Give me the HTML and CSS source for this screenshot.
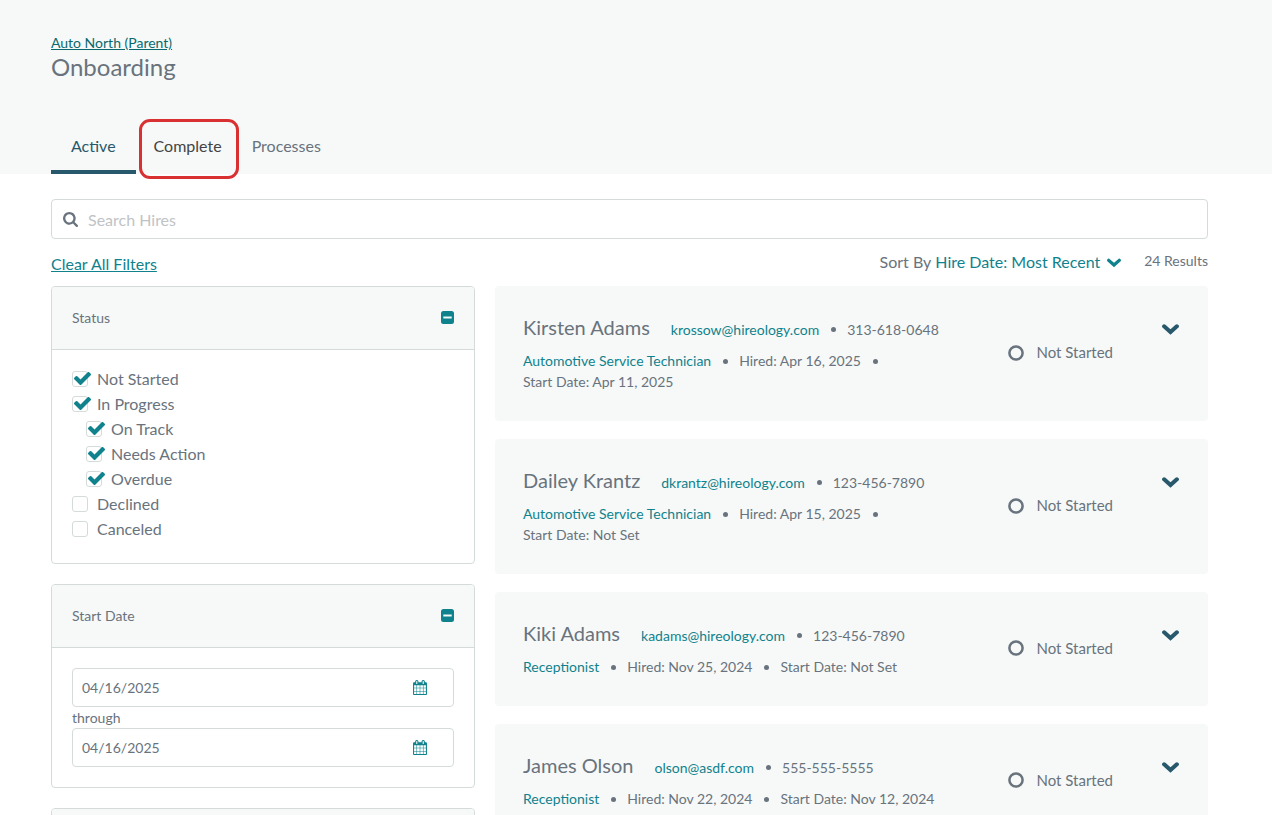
FILE: index.html
```html
<!DOCTYPE html>
<html lang="en">
<head>
<meta charset="utf-8">
<meta name="viewport" content="width=device-width, initial-scale=1">
<title>Onboarding</title>
<link rel="stylesheet" href="styles.css">
</head>
<body>
<svg class="sprite" aria-hidden="true">
  <symbol id="search" viewBox="64 128 1664 1664"><path d="M1216 832q0-185-131.500-316.500t-316.500-131.500-316.500 131.500-131.500 316.500 131.500 316.500 316.500 131.500 316.500-131.500 131.500-316.500zm512 832q0 52-38 90t-90 38q-54 0-90-38l-343-342q-179 124-399 124-143 0-273.500-55.500t-225-150-150-225-55.500-273.500 55.500-273.500 150-225 225-150 273.500-55.500 273.500 55.500 225 150 150 225 55.500 273.500q0 220-124 399l343 343q37 37 37 90z"/></symbol>
  <symbol id="check" viewBox="121 338 1550 1184"><path d="M1671 566q0 40-28 68l-724 724-136 136q-28 28-68 28t-68-28l-136-136-362-362q-28-28-28-68t28-68l136-136q28-28 68-28t68 28l294 295 656-657q28-28 68-28t68 28l136 136q28 28 28 68z"/></symbol>
  <symbol id="calendar" viewBox="64 0 1664 1792"><path d="M192 1664h288v-288h-288v288zm352 0h320v-288h-320v288zm-352-352h288v-320h-288v320zm352 0h320v-320h-320v320zm-352-384h288v-288h-288v288zm736 736h320v-288h-320v288zm-384-736h320v-288h-320v288zm768 736h288v-288h-288v288zm-384-352h320v-320h-320v320zm-352-864v-288q0-13-9.500-22.500t-22.500-9.500h-64q-13 0-22.500 9.500t-9.500 22.500v288q0 13 9.500 22.500t22.500 9.500h64q13 0 22.500-9.500t9.500-22.500zm736 864h288v-320h-288v320zm-384-384h320v-288h-320v288zm384 0h288v-288h-288v288zm32-480v-288q0-13-9.500-22.500t-22.500-9.500h-64q-13 0-22.500 9.500t-9.500 22.500v288q0 13 9.500 22.500t22.500 9.500h64q13 0 22.500-9.500t9.500-22.500zm384-64v1280q0 52-38 90t-90 38h-1408q-52 0-90-38t-38-90v-1280q0-52 38-90t90-38h128v-96q0-66 47-113t113-47h64q66 0 113 47t47 113v96h384v-96q0-66 47-113t113-47h64q66 0 113 47t47 113v96h128q52 0 90 38t38 90z"/></symbol>
  <symbol id="chevron" viewBox="0 0 16 10"><path d="M2 2l6 5.400L14 2" fill="none" stroke="currentColor" stroke-width="3.800" stroke-linecap="round"/></symbol>
  <symbol id="ring" viewBox="0 0 16 16"><circle cx="8" cy="8" r="6.600" fill="none" stroke="currentColor" stroke-width="2.500"/></symbol>
  <symbol id="minus" viewBox="0 0 13 13"><path fill-rule="evenodd" d="M2.500 0h8A2.500 2.500 0 0 1 13 2.500v8a2.500 2.500 0 0 1-2.500 2.500h-8A2.500 2.500 0 0 1 0 10.500v-8A2.500 2.500 0 0 1 2.500 0zM2.300 5.500v2h8.400v-2z"/></symbol>
</svg>

<header class="page-header">
  <a class="parent-link" href="#">Auto North (Parent)</a>
  <h1 class="page-title">Onboarding</h1>
  <nav class="tabs">
    <a class="tab tab-active" href="#">Active</a>
    <a class="tab tab-highlight" href="#">Complete</a>
    <a class="tab" href="#">Processes</a>
  </nav>
</header>

<main class="content">
  <div class="search">
    <svg class="search-icon" aria-hidden="true"><use href="#search"/></svg>
    <input class="search-input" type="text" placeholder="Search Hires" aria-label="Search Hires">
  </div>

  <div class="toolbar">
    <a class="clear" href="#">Clear All Filters</a>
    <div class="sort">
      <span>Sort By</span>
      <button class="sort-button" type="button">Hire Date: Most Recent <svg class="sort-chevron" aria-hidden="true"><use href="#chevron"/></svg></button>
    </div>
    <span class="results">24 Results</span>
  </div>

  <div class="columns">
    <aside class="filters">
      <section class="panel">
        <div class="panel-header">
          <h2 class="panel-title">Status</h2>
          <button class="icon-button" type="button" aria-label="Collapse Status"><svg class="minus-icon"><use href="#minus"/></svg></button>
        </div>
        <div class="panel-body status-list">
          <label class="option"><span class="box"><input class="tick" type="checkbox" checked><svg class="mark"><use href="#check"/></svg></span>Not Started</label>
          <label class="option"><span class="box"><input class="tick" type="checkbox" checked><svg class="mark"><use href="#check"/></svg></span>In Progress</label>
          <label class="option option-nested"><span class="box"><input class="tick" type="checkbox" checked><svg class="mark"><use href="#check"/></svg></span>On Track</label>
          <label class="option option-nested"><span class="box"><input class="tick" type="checkbox" checked><svg class="mark"><use href="#check"/></svg></span>Needs Action</label>
          <label class="option option-nested"><span class="box"><input class="tick" type="checkbox" checked><svg class="mark"><use href="#check"/></svg></span>Overdue</label>
          <label class="option"><span class="box"><input class="tick" type="checkbox"><svg class="mark"><use href="#check"/></svg></span>Declined</label>
          <label class="option"><span class="box"><input class="tick" type="checkbox"><svg class="mark"><use href="#check"/></svg></span>Canceled</label>
        </div>
      </section>

      <section class="panel">
        <div class="panel-header">
          <h2 class="panel-title">Start Date</h2>
          <button class="icon-button" type="button" aria-label="Collapse Start Date"><svg class="minus-icon"><use href="#minus"/></svg></button>
        </div>
        <div class="panel-body date-range">
          <div class="date-field">
            <input class="date-input" type="text" value="04/16/2025" aria-label="Start date from">
            <button class="icon-button" type="button" aria-label="Open calendar"><svg class="calendar-icon"><use href="#calendar"/></svg></button>
          </div>
          <label class="through" for="date-to">through</label>
          <div class="date-field">
            <input class="date-input" id="date-to" type="text" value="04/16/2025">
            <button class="icon-button" type="button" aria-label="Open calendar"><svg class="calendar-icon"><use href="#calendar"/></svg></button>
          </div>
        </div>
      </section>

      <section class="panel">
        <div class="panel-header"></div>
      </section>
    </aside>

    <div class="hires">
      <article class="card">
        <div class="info">
          <div class="person">
            <h3 class="name">Kirsten Adams</h3>
            <a class="link" href="#">krossow@hireology.com</a><i class="dot"></i><span>313-618-0648</span>
          </div>
          <div class="details">
            <a class="link" href="#">Automotive Service Technician</a><i class="dot"></i><span>Hired: Apr 16, 2025</span><i class="dot"></i><span>Start Date: Apr 11, 2025</span>
          </div>
        </div>
        <div class="status"><svg class="ring" aria-hidden="true"><use href="#ring"/></svg>Not Started</div>
        <button class="icon-button expand" type="button" aria-label="Expand Kirsten Adams"><svg class="chevron-icon"><use href="#chevron"/></svg></button>
      </article>

      <article class="card">
        <div class="info">
          <div class="person">
            <h3 class="name">Dailey Krantz</h3>
            <a class="link" href="#">dkrantz@hireology.com</a><i class="dot"></i><span>123-456-7890</span>
          </div>
          <div class="details">
            <a class="link" href="#">Automotive Service Technician</a><i class="dot"></i><span>Hired: Apr 15, 2025</span><i class="dot"></i><span>Start Date: Not Set</span>
          </div>
        </div>
        <div class="status"><svg class="ring" aria-hidden="true"><use href="#ring"/></svg>Not Started</div>
        <button class="icon-button expand" type="button" aria-label="Expand Dailey Krantz"><svg class="chevron-icon"><use href="#chevron"/></svg></button>
      </article>

      <article class="card">
        <div class="info">
          <div class="person">
            <h3 class="name">Kiki Adams</h3>
            <a class="link" href="#">kadams@hireology.com</a><i class="dot"></i><span>123-456-7890</span>
          </div>
          <div class="details">
            <a class="link" href="#">Receptionist</a><i class="dot"></i><span>Hired: Nov 25, 2024</span><i class="dot"></i><span>Start Date: Not Set</span>
          </div>
        </div>
        <div class="status"><svg class="ring" aria-hidden="true"><use href="#ring"/></svg>Not Started</div>
        <button class="icon-button expand" type="button" aria-label="Expand Kiki Adams"><svg class="chevron-icon"><use href="#chevron"/></svg></button>
      </article>

      <article class="card">
        <div class="info">
          <div class="person">
            <h3 class="name">James Olson</h3>
            <a class="link" href="#">olson@asdf.com</a><i class="dot"></i><span>555-555-5555</span>
          </div>
          <div class="details">
            <a class="link" href="#">Receptionist</a><i class="dot"></i><span>Hired: Nov 22, 2024</span><i class="dot"></i><span>Start Date: Nov 12, 2024</span>
          </div>
        </div>
        <div class="status"><svg class="ring" aria-hidden="true"><use href="#ring"/></svg>Not Started</div>
        <button class="icon-button expand" type="button" aria-label="Expand James Olson"><svg class="chevron-icon"><use href="#chevron"/></svg></button>
      </article>
    </div>
  </div>
</main>
</body>
</html>
```

FILE: styles.css
```css
:root {
  --text: #69737d;
  --teal: #0f828d;
  --navy: #28586b;
  --surface: #f7f9f8;
  --line: #d5dadb;
}

* { box-sizing: border-box; }

body {
  margin: 0;
  height: 100vh;
  overflow: hidden;
  background: #fff;
  color: var(--text);
  font: 14px/21px Lato, sans-serif;
}

h1, h2, h3 { margin: 0; font-weight: 400; }

button, input { font: inherit; color: inherit; }

svg { display: block; fill: currentColor; }

.sprite { position: absolute; width: 0; height: 0; }

.page-header {
  display: flex;
  flex-direction: column;
  align-items: flex-start;
  padding: 32px 64px 0 51px;
  background: var(--surface);
}

.parent-link { color: #0a696f; }

.page-title { font-size: 24px; line-height: 28px; }

.tabs {
  display: flex;
  gap: 3px;
  height: 55px;
  margin-top: 38px;
  font-size: 16px;
}

.tab {
  padding: 16px 10px 0;
  color: var(--text);
  text-decoration: none;
}

.tab-active {
  padding: 16px 20px 0;
  border-bottom: 4px solid var(--navy);
  color: var(--navy);
}

.tab-highlight {
  height: 60px;
  padding: 13px 14px 0 12px;
  border: 3px solid #d93032;
  border-radius: 11px;
  color: #444;
}

.content { padding: 25px 64px 0 51px; }

.search {
  display: flex;
  align-items: center;
  gap: 10px;
  height: 40px;
  padding: 0 11px;
  border: 1px solid var(--line);
  border-radius: 4px;
}

.search-icon { width: 15px; height: 15px; }

.search-input {
  flex: 1;
  min-width: 0;
  padding: 0;
  border: 0;
  background: none;
  font-size: 16px;
  outline: none;
}

.search-input::placeholder { color: #bfc3c6; opacity: 1; }

.toolbar {
  display: flex;
  align-items: flex-start;
  height: 47px;
  padding-top: 12px;
  font-size: 16px;
}

.clear { margin: 2px auto 0 0; color: var(--teal); }

.sort { display: flex; gap: 4px; }

.sort-button {
  display: flex;
  align-items: center;
  gap: 7px;
  padding: 0;
  border: 0;
  background: none;
  color: var(--teal);
}

.sort-chevron { width: 14px; height: 10px; margin-top: 2px; }

.results { margin-left: 23px; font-size: 14px; line-height: 20px; }

.columns {
  display: grid;
  grid-template-columns: minmax(0, 424fr) minmax(0, 713fr);
  gap: 20px;
  align-items: start;
}

.filters { display: grid; gap: 20px; }

.panel { border: 1px solid var(--line); border-radius: 4px; overflow: hidden; }

.panel-header {
  display: flex;
  align-items: center;
  justify-content: space-between;
  height: 63px;
  padding: 0 20px 2px;
  border-bottom: 1px solid var(--line);
  background: var(--surface);
}

.panel-title { font-size: 14px; }

.icon-button { padding: 0; border: 0; background: none; color: var(--teal); }

.minus-icon { width: 13px; height: 13px; }

.status-list { padding: 16px 20px 22px; }

.option {
  display: flex;
  align-items: center;
  gap: 9px;
  font-size: 16px;
  line-height: 25px;
}

.option-nested { padding-left: 14px; }

.box { position: relative; width: 16px; height: 16px; }

.tick {
  display: block;
  appearance: none;
  width: 16px;
  height: 16px;
  margin: 0;
  border: 1px solid var(--line);
  border-radius: 3px;
  background: #fff;
}

.mark {
  position: absolute;
  top: 1px;
  left: 2px;
  width: 17px;
  height: 13px;
  color: var(--teal);
  visibility: hidden;
}

.tick:checked + .mark { visibility: visible; }

.date-range { display: grid; padding: 20px; }

.date-field {
  display: flex;
  align-items: center;
  height: 39px;
  padding: 0 26px 0 9px;
  border: 1px solid var(--line);
  border-radius: 4px;
}

.date-input {
  flex: 1;
  min-width: 0;
  padding: 0;
  border: 0;
  background: none;
  outline: none;
}

.calendar-icon { width: 14px; height: 15px; }

.hires { display: grid; gap: 18px; }

.card {
  display: grid;
  grid-template-columns: minmax(0, 1fr) auto auto;
  column-gap: 49px;
  padding: 27px 29px 29px 28px;
  border-radius: 4px;
  background: var(--surface);
}

.person { display: flex; align-items: baseline; }

.name { margin-right: 21px; font-size: 20px; line-height: 28px; }

.details { display: flex; flex-wrap: wrap; margin-top: 9px; }

.link { color: var(--teal); text-decoration: none; }

.dot {
  align-self: center;
  width: 5px;
  height: 5px;
  margin: 1px 11px 0 12px;
  border-radius: 50%;
  background: var(--text);
}

.person .dot { margin-top: 5px; }

.status {
  display: flex;
  align-items: center;
  gap: 12px;
  font-size: 15px;
}

.ring { width: 16px; height: 16px; }

.expand {
  align-self: start;
  margin-top: 11px;
  color: var(--navy);
}

.chevron-icon { width: 17px; height: 11px; }
```
